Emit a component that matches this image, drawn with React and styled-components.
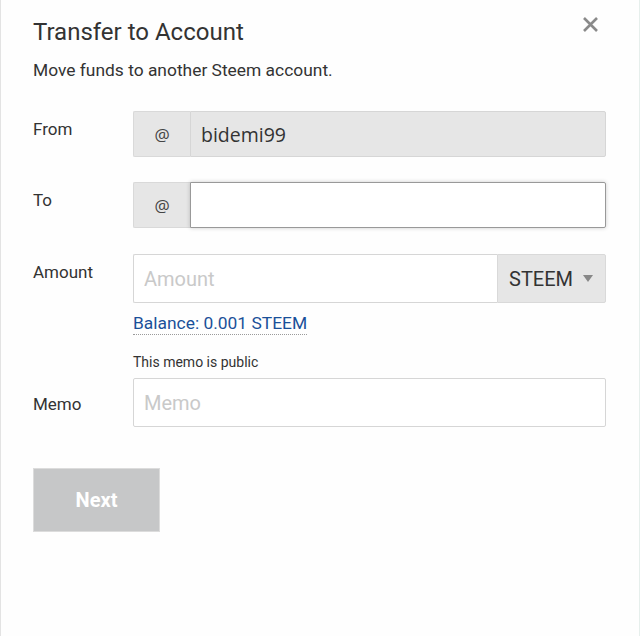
import React from 'react'
import styled, { createGlobalStyle } from 'styled-components'

const Global = createGlobalStyle`
  html, body {
    margin: 0;
    padding: 0;
    background: #fefefe;
    font-family: Roboto, 'Liberation Sans', sans-serif;
    color: #333;
  }
  * { box-sizing: border-box; }
`

const Modal = styled.div`
  position: relative;
  width: 640px;
  height: 636px;
  border-left: 1px solid #e3e3e3;
  border-right: 1px solid #e6efec;
  padding: 16px 33px 0 32px;
  background: #fefefe;
`

const Close = styled.button`
  position: absolute;
  top: 13px;
  right: 38px;
  border: 0;
  background: transparent;
  padding: 0;
  cursor: pointer;
  width: 22px;
  height: 22px;
  display: flex;
  align-items: center;
  justify-content: center;
`

const Title = styled.h1`
  font-size: 24px;
  font-weight: 400;
  margin: 0;
  line-height: 32px;
  color: #333;
`

const Subtitle = styled.p`
  font-size: 17.4px;
  margin: 10px 0 0;
  line-height: 24px;
  color: #333;
`

const Form = styled.div`
  display: grid;
  grid-template-columns: 100px 1fr;
  margin-top: 29px;
`

const Label = styled.label`
  font-size: 17px;
  line-height: 24px;
  padding-top: ${({ top }) => top || 8}px;
  color: #333;
`

const Field = styled.div`
  margin-bottom: ${({ gap }) => gap}px;
`

const Group = styled.div`
  display: flex;
  height: ${({ h }) => h || 46}px;
`

const Addon = styled.span`
  width: 57px;
  flex: none;
  display: flex;
  align-items: center;
  justify-content: center;
  background: #e6e6e6;
  border: 1px solid #d9d9d9;
  border-right: 0;
  border-radius: 2px 0 0 2px;
  font-family: 'Open Sans', sans-serif;
  font-size: 17px;
  color: #444;
`

const Input = styled.input`
  flex: 1;
  min-width: 0;
  height: 100%;
  border: 1px solid ${({ focus }) => (focus ? '#999' : '#d6d6d6')};
  border-radius: ${({ joined }) => (joined ? '0 2px 2px 0' : '2px')};
  background: ${({ disabled }) => (disabled ? '#e6e6e6' : '#fff')};
  font-family: ${({ disabled }) => (disabled ? "'Open Sans', sans-serif" : 'inherit')};
  font-size: ${({ disabled }) => (disabled ? 19.5 : 20)}px;
  color: #333;
  padding: 0 10px;
  outline: none;
  box-shadow: ${({ focus }) => (focus ? '0 0 4px rgba(0,0,0,0.2)' : 'none')};

  &::placeholder {
    color: #c9c9c9;
    opacity: 1;
  }
  &:disabled {
    color: #333;
  }
`

const AmountInput = styled(Input)`
  border-right: 0;
  border-radius: 2px 0 0 2px;
`

const Select = styled.div`
  width: 109px;
  flex: none;
  display: flex;
  align-items: center;
  justify-content: space-between;
  padding: 0 12px 0 11px;
  background: #e6e6e6;
  border: 1px solid #d9d9d9;
  border-radius: 0 2px 2px 0;
  font-size: 20px;
  color: #333;
`

const Caret = styled.span`
  width: 0;
  height: 0;
  border-left: 5px solid transparent;
  border-right: 5px solid transparent;
  border-top: 7px solid #888;
`

const Balance = styled.a`
  display: inline-block;
  margin-top: 9px;
  font-size: 17.4px;
  line-height: 22px;
  color: #1a5099;
  text-decoration: none;
  border-bottom: 1px dotted #9a9a9a;
`

const Hint = styled.div`
  font-size: 14px;
  line-height: 18px;
  color: #333;
  margin-bottom: 7px;
`

const Button = styled.button`
  margin-top: 41px;
  width: 127px;
  height: 64px;
  border: 1px solid #dcdcdc;
  background: #c6c7c8;
  color: #fff;
  font-family: inherit;
  font-size: 20px;
  font-weight: 700;
  cursor: not-allowed;
`

export default function App() {
  return (
    <>
      <Global />
      <Modal>
        <Close aria-label="Close">
          <svg width="17" height="17" viewBox="0 0 17 17">
            <path d="M2 2 L15 15 M15 2 L2 15" stroke="#8a8a8a" strokeWidth="2.6" />
          </svg>
        </Close>
        <Title>Transfer to Account</Title>
        <Subtitle>Move funds to another Steem account.</Subtitle>
        <Form>
          <Label top={6}>From</Label>
          <Field gap={25}>
            <Group h={46}>
              <Addon>@</Addon>
              <Input joined disabled value="bidemi99" readOnly />
            </Group>
          </Field>

          <Label top={6}>To</Label>
          <Field gap={26}>
            <Group h={46}>
              <Addon>@</Addon>
              <Input joined focus />
            </Group>
          </Field>

          <Label top={6}>Amount</Label>
          <Field gap={18}>
            <Group h={49}>
              <AmountInput placeholder="Amount" />
              <Select>
                STEEM <Caret />
              </Select>
            </Group>
            <Balance href="#">Balance: 0.001 STEEM</Balance>
          </Field>

          <span />
          <Hint>This memo is public</Hint>

          <Label top={14}>Memo</Label>
          <Field gap={0}>
            <Group h={49}>
              <Input placeholder="Memo" />
            </Group>
          </Field>
        </Form>
        <Button disabled>Next</Button>
      </Modal>
    </>
  )
}
